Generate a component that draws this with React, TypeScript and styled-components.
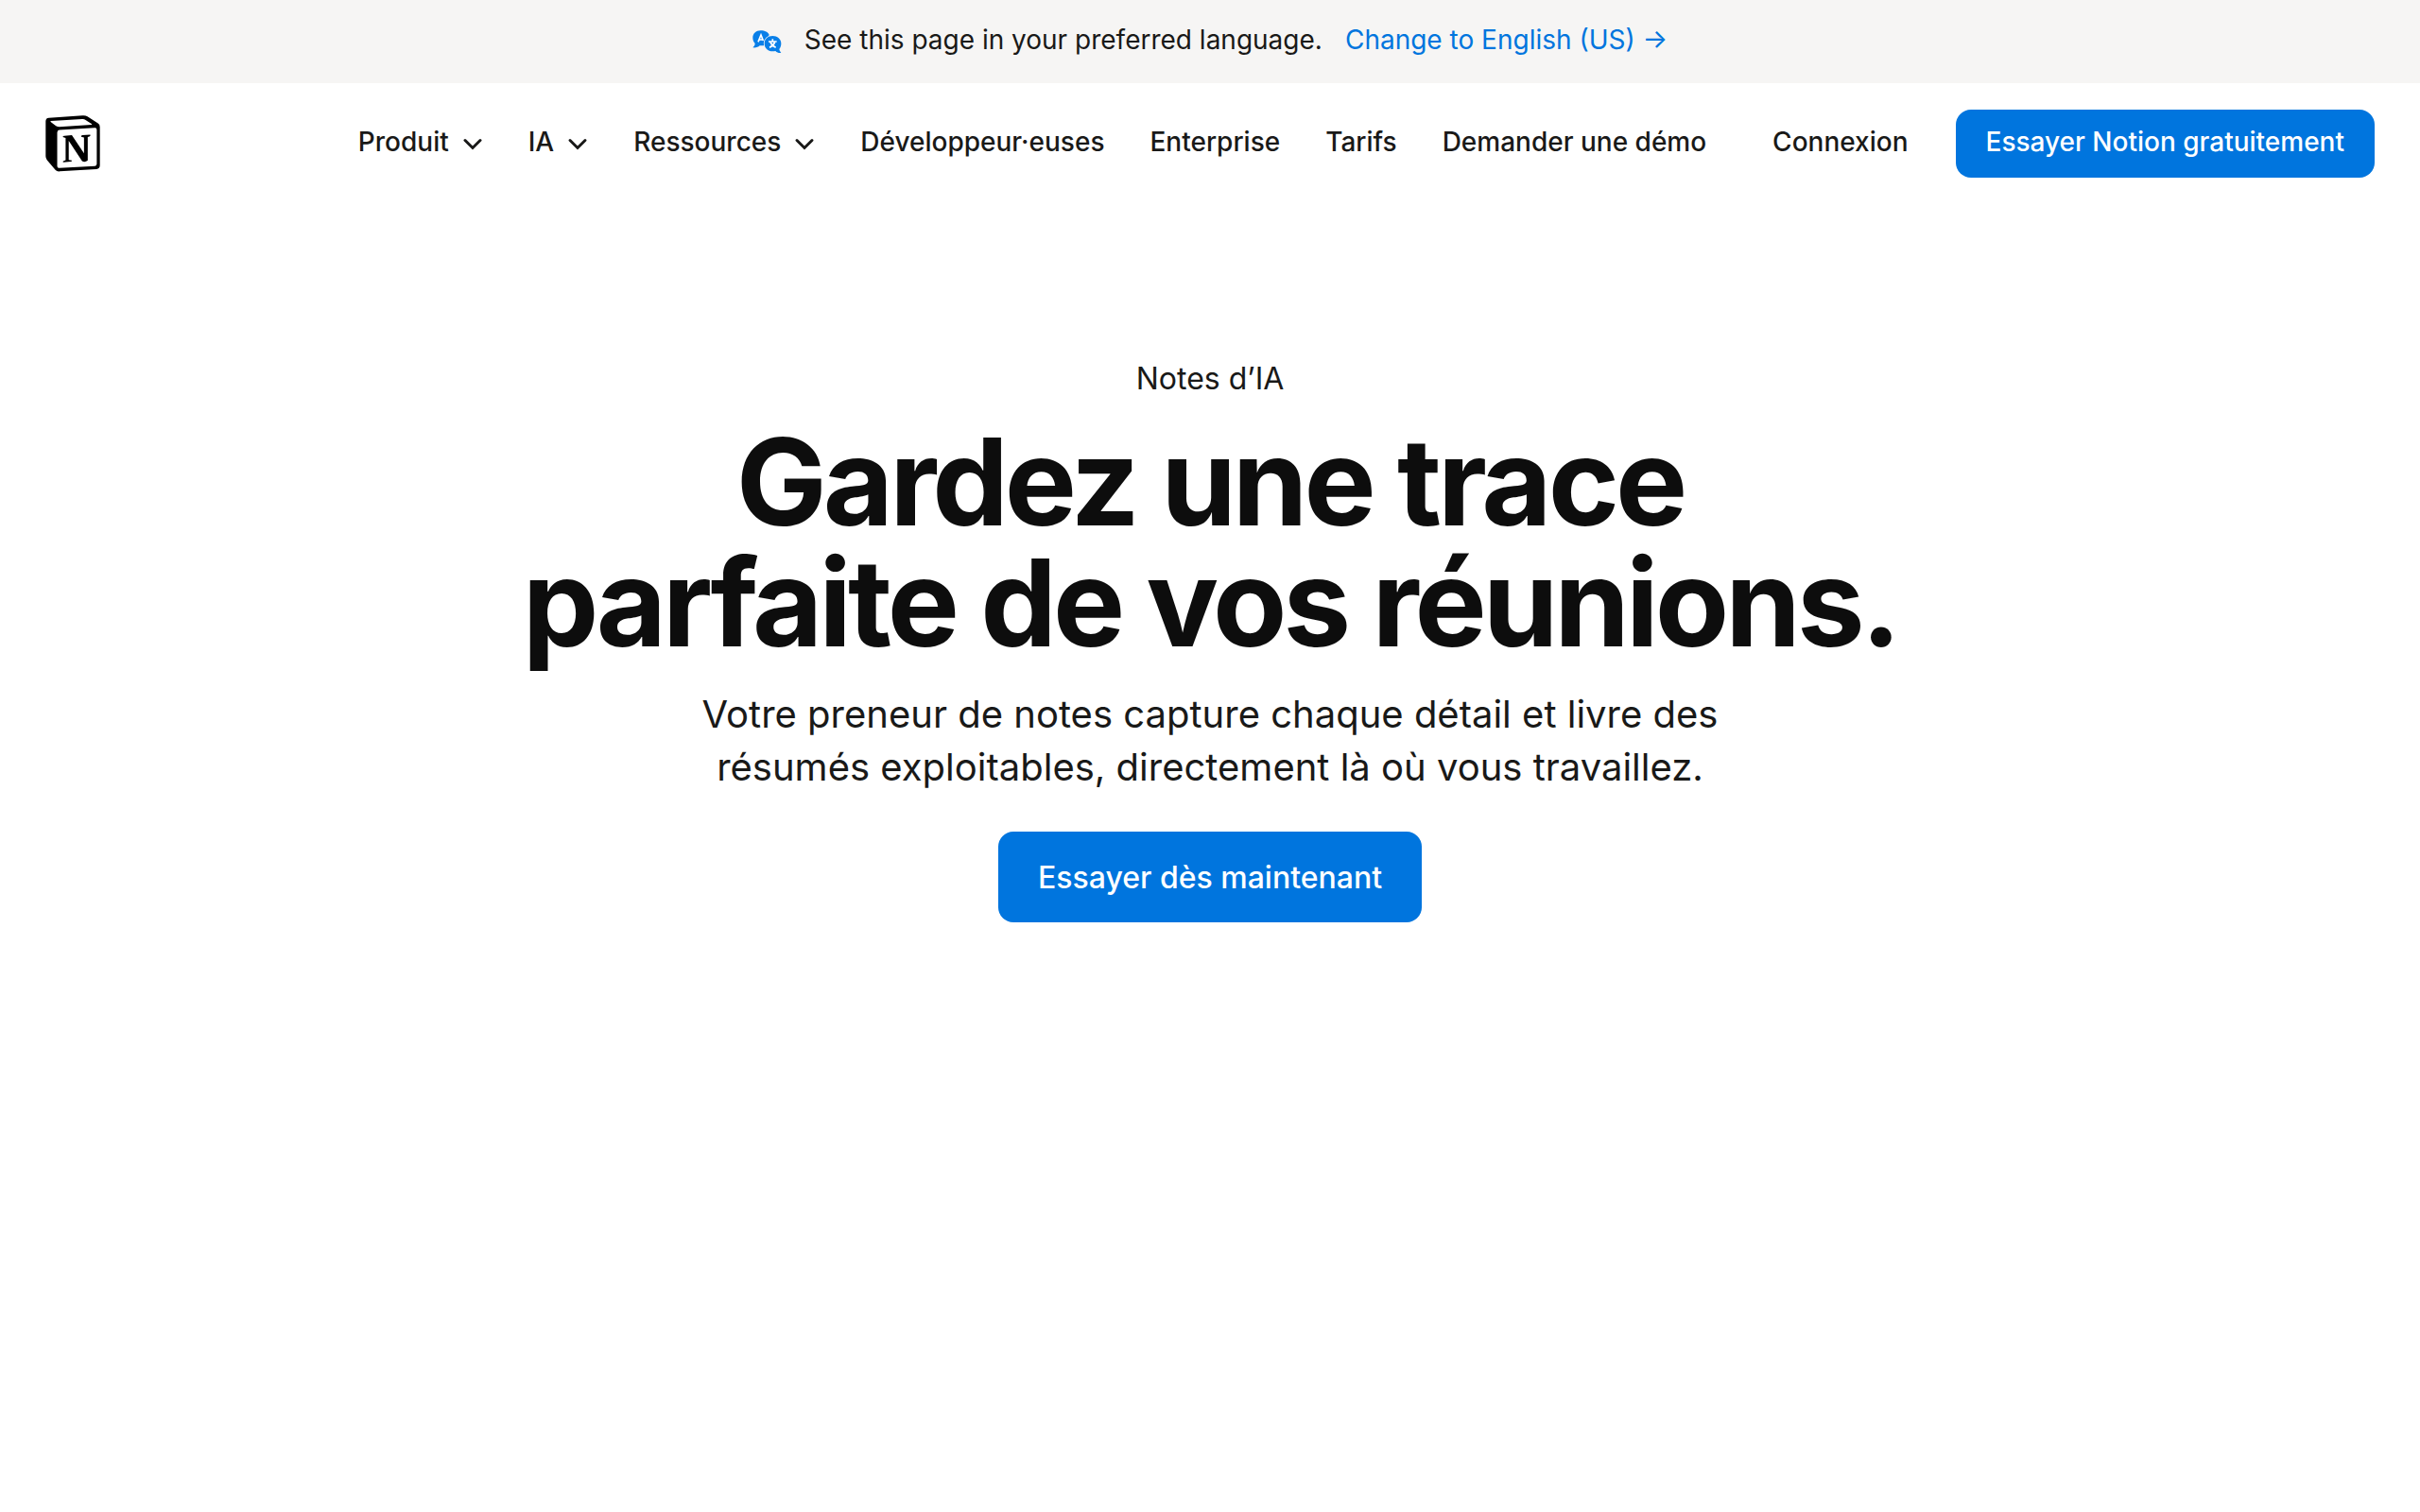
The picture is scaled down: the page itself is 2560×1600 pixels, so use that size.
import React from 'react';
import styled, { createGlobalStyle } from 'styled-components';

const Global = createGlobalStyle`
  * { box-sizing: border-box; }
  body {
    margin: 0;
    background: #fff;
    color: #191918;
    font-family: Inter, "Liberation Sans", sans-serif;
  }
  button { font: inherit; color: inherit; background: none; border: 0; padding: 0; cursor: pointer; }
`;

const TextLink = styled.a`
  color: inherit;
  text-decoration: none;
  white-space: nowrap;
`;

const Banner = styled.aside`
  display: flex;
  align-items: center;
  justify-content: center;
  gap: 24px;
  padding: 22px 48px 26px;
  background: #f6f5f4;
  font-size: 28px;
  line-height: 40px;
`;

const BannerLink = styled(TextLink)`
  color: #0075de;
`;

const Header = styled.header`
  display: flex;
  align-items: center;
  gap: 70px;
  padding: 28px 48px;
  font-size: 28px;
  font-weight: 500;
  line-height: 40px;
`;

const Logo = styled(TextLink)`
  display: flex;
`;

const Nav = styled.nav`
  display: flex;
  flex: 1;
  justify-content: flex-end;
  gap: 48px;
  padding-bottom: 4px;
`;

const NavButton = styled.button`
  display: flex;
  align-items: center;
  gap: 14px;
`;

const Actions = styled.div`
  display: flex;
  align-items: center;
  gap: 50px;
`;

const Login = styled(TextLink)`
  padding-bottom: 4px;
`;

const Cta = styled(TextLink)`
  padding: 14px 32px 18px;
  border-radius: 16px;
  background: #0075de;
  color: #fff;
  font-weight: 500;
`;

const LargeCta = styled(Cta)`
  padding: 25px 42px 23px;
  font-size: 32px;
  line-height: 48px;
`;

const Hero = styled.main`
  display: flex;
  flex-direction: column;
  align-items: center;
  padding: 161px 48px;
  text-align: center;
`;

const Eyebrow = styled.p`
  margin: 0;
  font-size: 32px;
  line-height: 48px;
`;

const Title = styled.h1`
  margin: 21px 0 26px;
  max-width: 1500px;
  color: #0d0d0d;
  font-size: 128px;
  font-weight: 700;
  line-height: 128px;
  letter-spacing: -4px;
  text-wrap: balance;
`;

const Lead = styled.p`
  margin: 0 0 40px;
  max-width: 1100px;
  font-size: 40px;
  line-height: 56px;
`;

const Chevron = () => (
  <svg width="22" height="24" viewBox="0 0 22 24" fill="none" stroke="currentColor" strokeWidth="3" aria-hidden="true">
    <path d="M3 10.5l8 8 8-8" strokeLinecap="round" />
  </svg>
);

const NotionLogo = () => (
  <svg width="58" height="60" viewBox="53 66 176 180" aria-hidden="true">
    <path
      fill="#000"
      fillRule="evenodd"
      d="M64 73 L172 66 Q182 65 188 69 L222 91 Q228 95 228 102 V226 Q228 237 217 238 L99 245 Q90 246 85 240 L58 208 Q54 203 54 196 V84 Q54 74 64 73 Z
         M71 83 Q67 84 71 87 L87 99 Q92 102 98 102 L201 95 Q205 94 201 92 L182 80 Q177 76 171 77 Z
         M98 112 Q91 113 91 120 V228 Q91 235 98 234 L212 228 Q218 227 218 221 V111 Q218 104 211 105 Z"
    />
    <path
      fill="#000"
      d="M109 135 Q109 131 114 131 L138 129 L177 187 V136 L168 134 Q167 129 172 129 L197 127 Q199 132 194 133 L189 135 V210 Q180 217 171 212 L128 147 V208 L138 210 Q139 214 134 214 L110 216 Q108 212 112 211 L118 209 V138 Z"
    />
  </svg>
);

const TranslateIcon = () => (
  <svg width="31" height="29" viewBox="50 83 93 87" aria-hidden="true">
    <path fill="#097fe8" d="M76 96 C61 96 51 106 51 119 C51 127 54 133 58 137 C58 143 55 146 51 150 C60 151 68 149 73 144 H86 L103 110 C100 101 89 96 76 96 Z" />
    <path d="M68 132 L77 110 L84 128 M72 125 H82" fill="none" stroke="#fff" strokeWidth="5" />
    <path
      fill="#097fe8"
      stroke="#f6f5f4"
      strokeWidth="5"
      paintOrder="stroke"
      d="M114 113 C99 113 88 123 88 137 C88 152 99 162 114 162 C117 162 120 162 123 161 C128 166 134 168 141 167 C138 163 136 160 135 155 C139 150 141 144 141 137 C141 123 129 113 114 113 Z"
    />
    <path d="M114 123 V130 M101 131 H127 M107 133 Q112 145 124 150 M121 133 Q116 145 104 150" fill="none" stroke="#fff" strokeWidth="5" />
  </svg>
);

export default function App() {
  return (
    <>
      <Global />
      <Banner>
        <TranslateIcon />
        <span>See this page in your preferred language.</span>
        <BannerLink href="#en">Change to English (US) →</BannerLink>
      </Banner>
      <Header>
        <Logo href="#accueil" aria-label="Notion">
          <NotionLogo />
        </Logo>
        <Nav>
          {['Produit', 'IA', 'Ressources'].map(label => (
            <NavButton key={label} type="button">
              {label}
              <Chevron />
            </NavButton>
          ))}
          <TextLink href="#developpeurs">Développeur·euses</TextLink>
          <TextLink href="#enterprise">Enterprise</TextLink>
          <TextLink href="#tarifs">Tarifs</TextLink>
          <TextLink href="#demo">Demander une démo</TextLink>
        </Nav>
        <Actions>
          <Login href="#connexion">Connexion</Login>
          <Cta href="#inscription">Essayer Notion gratuitement</Cta>
        </Actions>
      </Header>
      <Hero>
        <Eyebrow>Notes d’IA</Eyebrow>
        <Title>Gardez une trace parfaite de vos réunions.</Title>
        <Lead>
          Votre preneur de notes capture chaque détail et livre des résumés exploitables, directement là où vous
          travaillez.
        </Lead>
        <LargeCta href="#essayer">Essayer dès maintenant</LargeCta>
      </Hero>
    </>
  );
}
